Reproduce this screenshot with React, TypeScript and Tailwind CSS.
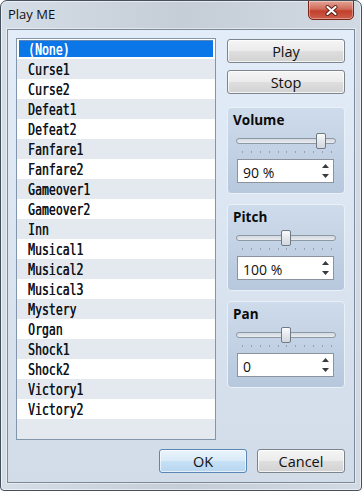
import React from "react";

const items = [
  "(None)",
  "Curse1",
  "Curse2",
  "Defeat1",
  "Defeat2",
  "Fanfare1",
  "Fanfare2",
  "Gameover1",
  "Gameover2",
  "Inn",
  "Musical1",
  "Musical2",
  "Musical3",
  "Mystery",
  "Organ",
  "Shock1",
  "Shock2",
  "Victory1",
  "Victory2",
];

function Btn({ label, primary = false, className = "" }: { label: string; primary?: boolean; className?: string }) {
  return (
    <div
      className={
        "h-[24px] rounded-[3px] border flex justify-center text-[14.5px] leading-[22px] pt-px text-[#111] " +
        (primary
          ? "border-[#5a87b3] bg-[linear-gradient(#eaf4fc,#d8eaf8_50%,#c6e0f5_52%,#b7d6f0)] shadow-[inset_0_0_0_1px_rgba(255,255,255,0.6)] "
          : "border-[#7e848b] bg-[linear-gradient(#f5f5f5,#ebebeb_50%,#dedede_52%,#d2d2d2)] shadow-[inset_0_0_0_1px_rgba(255,255,255,0.75)] ") +
        className
      }
    >
      {label}
    </div>
  );
}

function Group({ label, value, thumb }: { label: string; value: string; thumb: number }) {
  const ticks = Array.from({ length: 11 });
  return (
    <div className="h-[87px] rounded-[4px] border border-[#eaf0f8] bg-[linear-gradient(#cedbeb,#b7c8dd)] flex flex-col">
      <div className="pl-[5px] pt-[4px] text-[13.5px] leading-[16px] font-bold text-[#0a0a0a]">{label}</div>
      <div className="relative mx-[8px] mt-[5px] h-[16px] flex items-center">
        <div className="h-[6px] w-full rounded-full border border-[#8d98a5] bg-[linear-gradient(#d3d8df,#e9ecf0)]" />
        <div
          className="absolute top-0 h-[16px] w-[10px] rounded-[2px] border border-[#6f7a87] bg-[linear-gradient(#fbfbfc,#e4e7eb_50%,#d3d8de)]"
          style={{ left: thumb }}
        />
      </div>
      <div className="mt-[1px] h-[3px] ml-[14px] mr-[12px] flex justify-between">
        {ticks.map((_, i) => (
          <div key={i} className="w-px h-[2px] mt-px bg-[#97a1ad]" />
        ))}
      </div>
      <div className="mt-[6px] ml-[9px] w-[97px] h-[24px] border border-[#8a939e] bg-white flex items-center">
        <span className="flex-1 pl-[5px] pt-[2px] text-[14px] leading-[19px] text-[#111]">{value}</span>
        <div className="mr-[4px] flex flex-col items-center gap-[6px]">
          <svg width="7" height="4" viewBox="0 0 7 4">
            <path d="M0 4 L3.5 0 L7 4 Z" fill="#3a3a3a" />
          </svg>
          <svg width="7" height="4" viewBox="0 0 7 4">
            <path d="M0 0 L3.5 4 L7 0 Z" fill="#3a3a3a" />
          </svg>
        </div>
      </div>
    </div>
  );
}

export default function App() {
  return (
    <div className="w-[362px] h-[491px] flex flex-col border border-[#46505c] rounded-t-[7px] rounded-b-[4px] bg-[linear-gradient(90deg,#d5dde6,#c5cdd6_50%,#d1d9e2)] shadow-[inset_0_0_0_1px_rgba(255,255,255,0.55)] font-['Open_Sans',sans-serif] text-black overflow-hidden">
      <div className="h-[28px] flex items-start">
        <span className="ml-[7px] mt-[5px] text-[13px] leading-[16px] text-[#111]">Play ME</span>
        <div className="ml-auto mr-[7px] -mt-px h-[20px] w-[46px] rounded-b-[5px] border border-[#7b2519] bg-[linear-gradient(#e3a497,#d06b59_45%,#c2402c_55%,#cc5f4b)] shadow-[inset_0_0_0_1px_rgba(255,255,255,0.35)] flex items-center justify-center">
          <svg width="13" height="11" viewBox="0 0 13 11">
            <path d="M2.5 2 L10.5 9 M10.5 2 L2.5 9" stroke="#5b1d15" strokeWidth="4" strokeLinecap="round" />
            <path d="M2.5 2 L10.5 9 M10.5 2 L2.5 9" stroke="#ffffff" strokeWidth="2.2" strokeLinecap="round" />
          </svg>
        </div>
      </div>
      <div className="mx-[6px] h-[454px] border border-[#7d8998] bg-[linear-gradient(#e2edf9,#d1dce8)] shadow-[0_0_0_1px_rgba(255,255,255,0.45)] flex flex-col pl-[8px] pr-[9px] pt-[8px] pb-[9px]">
        <div className="flex h-[402px]">
          <div className="w-[200px] h-full border border-[#8395ab] bg-[#e3e9ef] flex flex-col font-['DejaVu_Sans_Mono',monospace]">
            {items.map((it, i) => {
              const sel = i === 0;
              return (
                <div
                  key={it}
                  className={
                    "relative h-[20px] pl-[11px] pt-[2px] leading-[18px] text-[15px] " +
                    (i % 2 === 1 ? "bg-[#e3e9ef] " : "bg-white ") +
                    (sel ? "text-white" : "text-[#0e1420]")
                  }
                >
                  {sel && (
                    <div className="absolute left-[2px] right-[2px] top-[1px] bottom-[2px] border-t border-[#5c86b9] bg-[#0b76e8]" />
                  )}
                  <span className="relative inline-block scale-x-[0.765] origin-left whitespace-nowrap [text-shadow:0.45px_0_0_currentColor]">
                    {it}
                  </span>
                </div>
              );
            })}
          </div>
          <div className="ml-[11px] w-[118px] flex flex-col">
            <Btn label="Play" className="mt-[1px]" />
            <Btn label="Stop" className="mt-[7px]" />
            <div className="mt-[13px]">
              <Group label="Volume" value="90 %" thumb={80} />
            </div>
            <div className="mt-[10px]">
              <Group label="Pitch" value="100 %" thumb={45} />
            </div>
            <div className="mt-[10px]">
              <Group label="Pan" value="0" thumb={45} />
            </div>
          </div>
        </div>
        <div className="mt-[9px] flex justify-end gap-[10px]">
          <Btn label="OK" primary className="w-[88px]" />
          <Btn label="Cancel" className="w-[88px]" />
        </div>
      </div>
    </div>
  );
}
